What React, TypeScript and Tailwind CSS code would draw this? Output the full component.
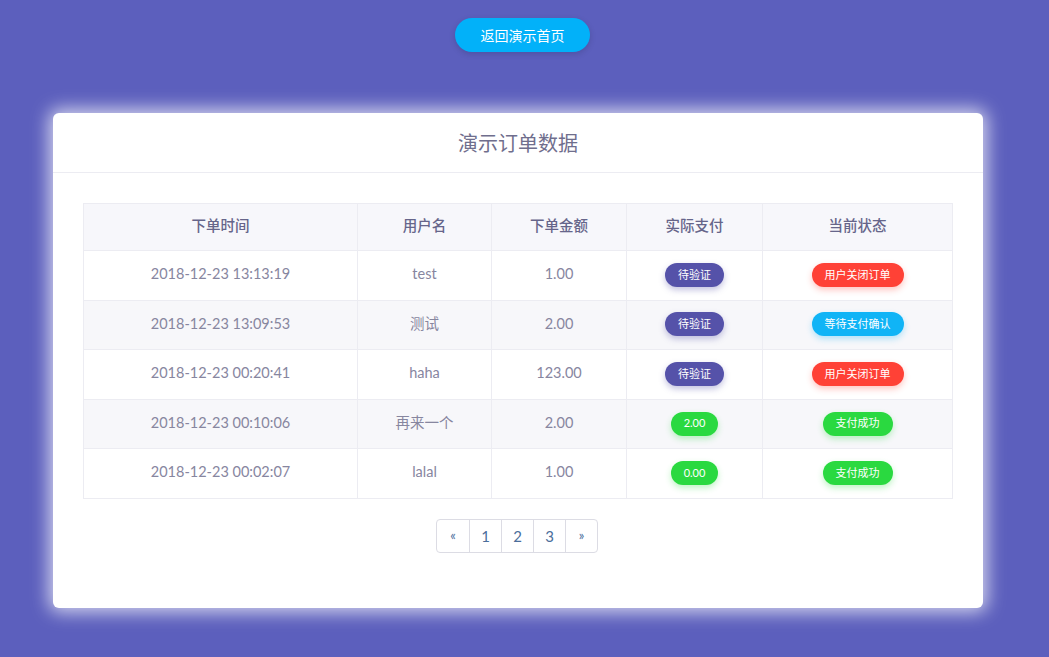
const rows = [
  { time: "2018-12-23 13:13:19", user: "test", amount: "1.00", paid: "待验证", paidTone: "indigo", status: "用户关闭订单", statusTone: "red" },
  { time: "2018-12-23 13:09:53", user: "测试", amount: "2.00", paid: "待验证", paidTone: "indigo", status: "等待支付确认", statusTone: "cyan" },
  { time: "2018-12-23 00:20:41", user: "haha", amount: "123.00", paid: "待验证", paidTone: "indigo", status: "用户关闭订单", statusTone: "red" },
  { time: "2018-12-23 00:10:06", user: "再来一个", amount: "2.00", paid: "2.00", paidTone: "green", status: "支付成功", statusTone: "green" },
  { time: "2018-12-23 00:02:07", user: "lalal", amount: "1.00", paid: "0.00", paidTone: "green", status: "支付成功", statusTone: "green" },
];

const tones: Record<string, string> = {
  indigo: "bg-[#5552a9] shadow-[0_3px_6px_rgba(85,82,169,0.35)]",
  red: "bg-[#ff4136] shadow-[0_3px_6px_rgba(255,65,54,0.3)]",
  cyan: "bg-[#10b4f6] shadow-[0_3px_6px_rgba(16,180,246,0.3)]",
  green: "bg-[#2ad940] shadow-[0_3px_6px_rgba(42,217,64,0.3)]",
};

function Badge({ label, tone }: { label: string; tone: string }) {
  return (
    <span className={`inline-flex h-6 items-center rounded-full px-[13px] text-[11px] text-white ${tones[tone]}`}>
      {label}
    </span>
  );
}

const cols = "grid grid-cols-[273px_134px_135px_136px_1fr]";

export default function App() {
  return (
    <div
      className="min-h-[657px] w-full bg-[#5c5fbd] pt-[18px] pb-[50px]"
      style={{ fontFamily: "Lato, 'Noto Sans CJK SC', sans-serif" }}
    >
      <div className="flex justify-center pr-[4px]">
        <button className="h-[34px] w-[135px] rounded-full bg-[#02b1f9] text-[14px] text-white shadow-[0_2px_6px_rgba(0,0,0,0.15)]">
          返回演示首页
        </button>
      </div>

      <div className="mx-[53px] mt-[61px] w-[930px] rounded-md bg-white shadow-[0_0_18px_4px_rgba(255,255,255,0.75)]">
        <div className="flex h-[60px] items-center justify-center border-b border-[#ececf2] text-[20px] text-[#6f6e8d]">
          演示订单数据
        </div>

        <div className="px-[30px] pt-[30px] pb-[55px]">
          <div className="border border-[#ececf2] text-[14.5px]">
            <div className={`${cols} h-[46px] bg-[#f7f7fb] text-[#66658a] font-medium`}>
              {["下单时间", "用户名", "下单金额", "实际支付", "当前状态"].map((h, i) => (
                <div key={h} className={`flex items-center justify-center pb-[2px] ${i > 0 ? "border-l border-[#ececf2]" : ""}`}>
                  {h}
                </div>
              ))}
            </div>
            {rows.map((r, idx) => (
              <div
                key={r.time}
                className={`${cols} h-[49.6px] border-t border-[#ececf2] text-[#87869f] ${idx % 2 === 1 ? "bg-[#f7f7fa]" : "bg-white"}`}
              >
                <div className="flex items-center justify-center pb-[3px]">{r.time}</div>
                <div className="flex items-center justify-center border-l border-[#ececf2] pb-[3px]">{r.user}</div>
                <div className="flex items-center justify-center border-l border-[#ececf2] pb-[3px]">{r.amount}</div>
                <div className="flex items-center justify-center border-l border-[#ececf2] pb-[1px]">
                  <Badge label={r.paid} tone={r.paidTone} />
                </div>
                <div className="flex items-center justify-center border-l border-[#ececf2] pb-[1px]">
                  <Badge label={r.status} tone={r.statusTone} />
                </div>
              </div>
            ))}
          </div>

          <div className="mt-[20px] flex justify-center pr-[2px]">
            <div className="flex h-[34px] rounded border border-[#dcdce4] text-[#4b6e9b]">
              {["«", "1", "2", "3", "»"].map((p, i) => (
                <div
                  key={p}
                  className={`flex w-[32px] items-center justify-center ${i > 0 ? "border-l border-[#dcdce4]" : ""} ${p === "«" || p === "»" ? "text-[13px]" : "text-[15px]"}`}
                >
                  {p}
                </div>
              ))}
            </div>
          </div>
        </div>
      </div>
    </div>
  );
}
